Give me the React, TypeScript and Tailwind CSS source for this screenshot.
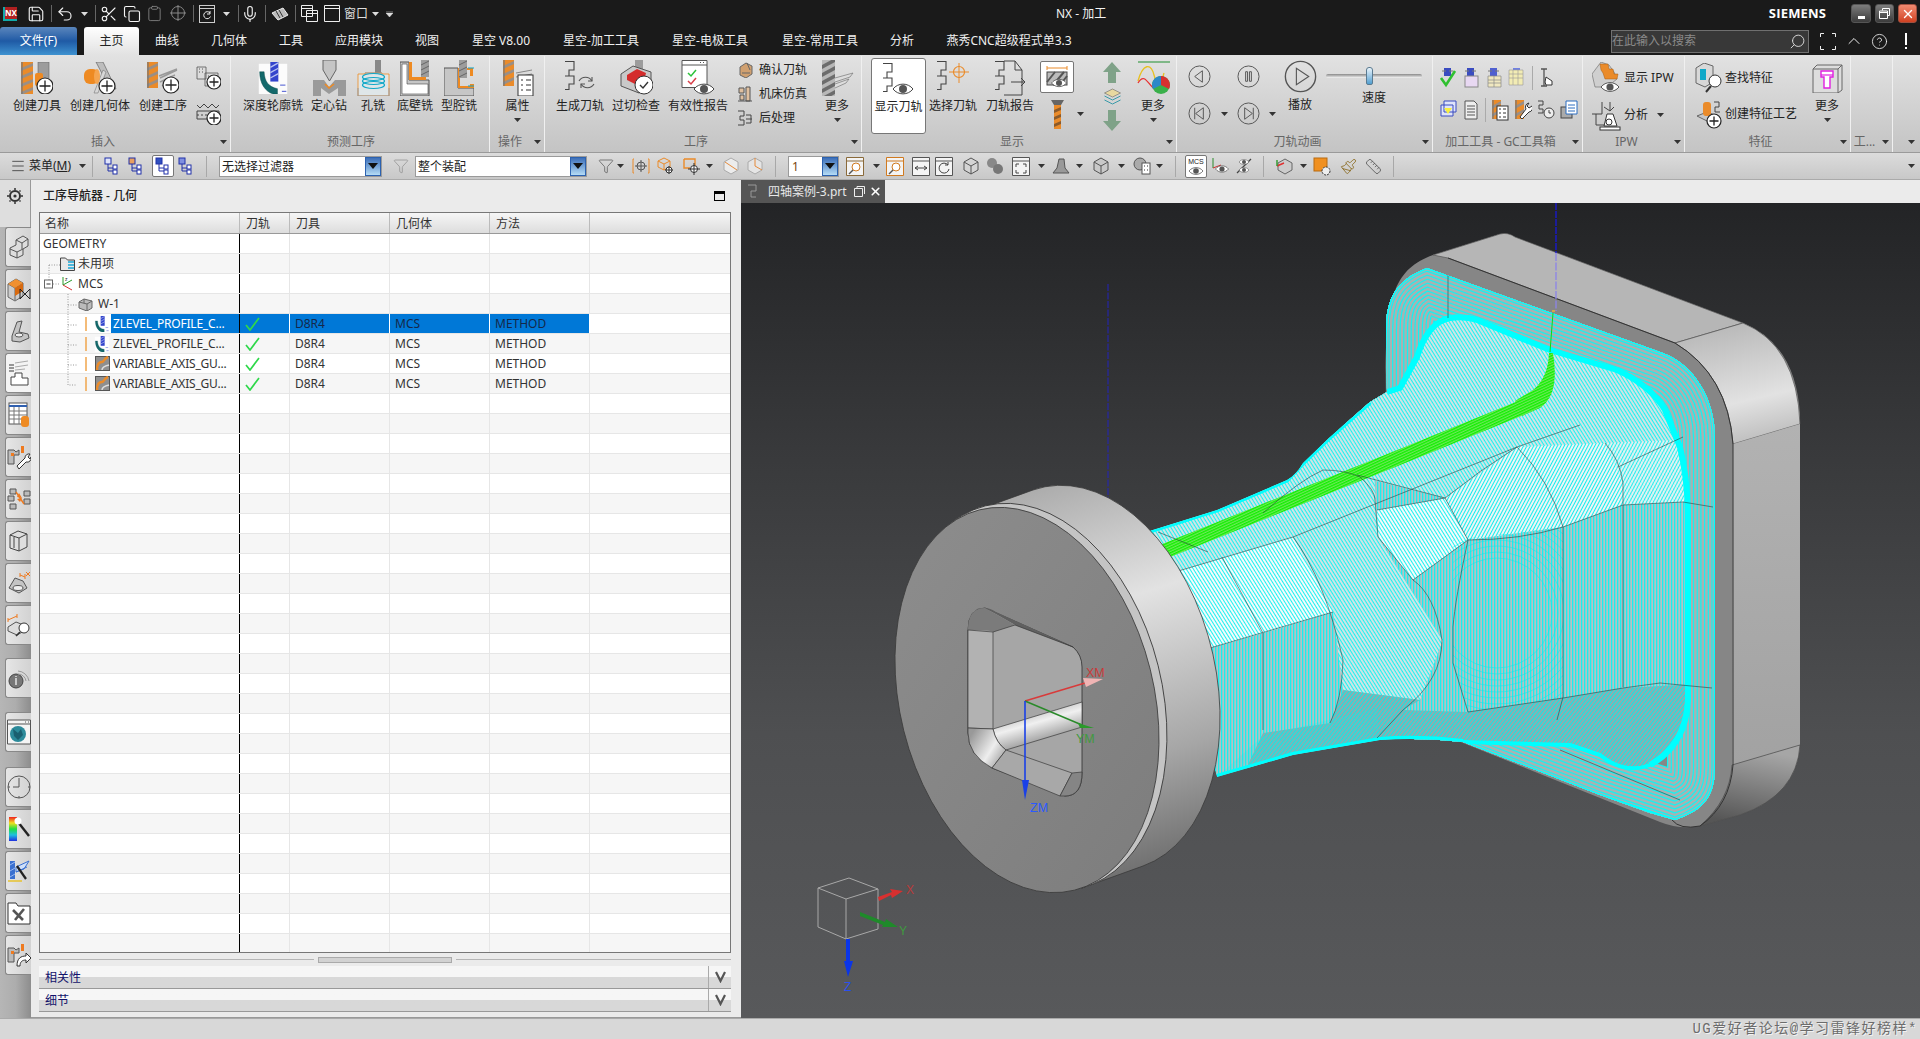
import type { ReactNode } from "react";
import { Save, Undo2, Scissors, Copy, Clipboard, Mic, Search, CircleHelp, ChevronUp, Menu, X, Filter, Ruler, Paintbrush } from "lucide-react";

const Sv = ({ w = 32, h = 32, children }: { w?: number; h?: number; children?: ReactNode }) => (
  <svg width={w} height={h} viewBox={`0 0 ${w} ${h}`} className="block shrink-0">
    {children}
  </svg>
);

const Caret = ({ dark = true }: { dark?: boolean }) => (
  <svg width="7" height="4" viewBox="0 0 7 4" className="block shrink-0">
    <path d="M0 0h7L3.5 4z" fill={dark ? "#333" : "#ddd"} />
  </svg>
);

// little drawing parts shared by the ribbon icons
const Mill = ({ x, y, w = 12, h = 32, c = "#ea8b2a" }: { x: number; y: number; w?: number; h?: number; c?: string }) => (
  <g>
    <rect x={x} y={y} width={w} height={h} fill={c} />
    {Array.from({ length: Math.floor(h / 8) }).map((_, i) => (
      <path key={i} d={`M${x} ${y + i * 8 + 6}L${x + w} ${y + i * 8 + 1}v3L${x} ${y + i * 8 + 9}z`} fill="#9a8f86" />
    ))}
    <rect x={x} y={y} width={2} height={h} fill="#777" opacity=".6" />
  </g>
);

const Plus = ({ x, y, r = 8 }: { x: number; y: number; r?: number }) => (
  <g>
    <circle cx={x} cy={y} r={r} fill="#fff" stroke="#222" strokeWidth="1.2" />
    <path d={`M${x - r + 2.5} ${y}H${x + r - 2.5}M${x} ${y - r + 2.5}V${y + r - 2.5}`} stroke="#222" strokeWidth="1.3" />
  </g>
);

const Eye = ({ x, y, r = 1 }: { x: number; y: number; r?: number }) => (
  <g transform={`translate(${x} ${y}) scale(${r})`}>
    <path d="M-10 0C-5 -6.5 5 -6.5 10 0C5 6.5 -5 6.5 -10 0z" fill="#fff" stroke="#444" strokeWidth="1" />
    <circle r="4" fill="#555" />
  </g>
);

const PathS = ({ x = 0, y = 0, s = 1, c = "#444" }: { x?: number; y?: number; s?: number; c?: string }) => (
  <path
    transform={`translate(${x} ${y}) scale(${s})`}
    d="M1 .5H10V9H5V15H10V23H5V28.5H1M5 15H1"
    fill="none"
    stroke={c}
    strokeWidth="1.1"
  />
);

const CircleBtn = ({ s = 23, children }: { s?: number; children?: ReactNode }) => (
  <svg width={s} height={s} viewBox="0 0 24 24" className="block shrink-0">
    <circle cx="12" cy="12" r="11" fill="none" stroke="#555" strokeWidth="1" />
    <g fill="none" stroke="#555" strokeWidth="1">{children}</g>
  </svg>
);

// ribbon large icons
const CreateTool = () => (
  <Sv>
    <Mill x={0} y={0} />
    <rect x={17} y={0} width={11} height={19} fill="#9c9c9c" stroke="#666" strokeWidth=".6" />
    <rect x={14} y={11} width={8} height={13} rx={2} fill="#ee8a22" />
    <Plus x={24} y={24} />
  </Sv>
);
const CreateGeom = () => (
  <Sv w={34}>
    <path d="M13 0h7l13 27h-6z" fill="#bdbdbd" stroke="#666" strokeWidth=".7" />
    <path d="M11 31L20 8l3 2-8 21z" fill="#d8d8d8" stroke="#777" strokeWidth=".6" />
    <rect x={1} y={7} width={15} height={15} rx={6} fill="#ee8a22" />
    <ellipse cx="14" cy="14.5" rx="3" ry="7.5" fill="#f5a550" />
    <Plus x={24} y={24} />
  </Sv>
);
const CreateOp = () => (
  <Sv>
    <Mill x={0} y={0} w={11} h={26} />
    <path d="M13 16l17-8M13 20l15-7M15 24l10-5M12 14l18-7" stroke="#999" strokeWidth="1.4" fill="none" />
    <Plus x={24} y={23} />
  </Sv>
);
const SmallA = () => (
  <Sv w={25} h={24}>
    <path d="M1 1h9v12H1zM9 7h13v13H9z" fill="#ddd" stroke="#555" strokeWidth=".8" />
    <path d="M3 3h1M6 3h1M3 6h1M6 6h1M12 10h1M15 10h1M18 10h1M12 13h1M15 13h1" stroke="#555" />
    <Plus x={18} y={16} r={7} />
  </Sv>
);
const SmallB = () => (
  <Sv w={25} h={25}>
    <path d="M1 5l3 3 4-4 4 4 4-4 4 4 3-3M1 11h22M1 11v8h10M23 11v2" fill="none" stroke="#444" strokeWidth="1" />
    <path d="M1 15h22" stroke="#444" strokeDasharray="2 2" />
    <Plus x={18} y={18} r={7} />
  </Sv>
);
const ZLevel = ({ s = 32 }: { s?: number }) => (
  <svg width={s} height={s} viewBox="0 0 32 36" className="block shrink-0">
    <rect x="0" y="2" width="32" height="34" fill="#fff" opacity=".9" />
    <path d="M1 11h5c.5 11 5 17 15 19v6H16C7 33 1 24 1 11z" fill="#14696b" stroke="#0b4a4c" strokeWidth=".5" />
    <rect x="13" y="0" width="9" height="22" fill="#3344cc" />
    <path d="M13 6l9-5M13 12l9-5M13 18l9-5" stroke="#b9c3f0" strokeWidth="1.5" />
    <path d="M24 26h6M26 33h5" stroke="#3344cc" strokeWidth="1" />
  </svg>
);
const SpotDrill = () => (
  <Sv w={33} h={36}>
    <path d="M0 20h11l5 7 6-7h11v16h-8V28l-9 6-8-6v8H0z" fill="#9a9a9a" />
    <path d="M10 0h13v10l-6.500 11L10 10z" fill="#c5c5c5" stroke="#666" />
    <path d="M12 24l4 4 5-4" stroke="#ee8a22" strokeWidth="1.6" fill="none" />
  </Sv>
);
const HoleMill = () => (
  <Sv w={33} h={36}>
    <rect x={18} y={0} width={6} height={13} fill="#888" />
    <path d="M1 14h7v-1h17v1h7v22H1z" fill="#dfe6e8" stroke="#ee8a22" strokeWidth=".8" />
    <path d="M1 28v8h31v-8M8 13h17" stroke="#999" fill="none" />
    {[17, 21, 25].map((y) => (
      <ellipse key={y} cx="16.500" cy={y} rx="11" ry="3.500" fill="none" stroke="#10a8c8" strokeWidth="1.2" />
    ))}
  </Sv>
);
const FloorWall = () => (
  <Sv w={30} h={36}>
    <path d="M0 2h9v18h20v16H0z" fill="#c6c6c6" stroke="#555" />
    <path d="M9 2h3v15h14v3H9z" fill="#ee8a22" />
    <path d="M2 4h5v20h21v10H2z" fill="#fff" stroke="#444" strokeWidth=".6" />
    <rect x={21} y={0} width={8} height={17} fill="#9c9c9c" />
    <path d="M21 5l8-4M21 10l8-4M21 15l8-4" stroke="#666" />
  </Sv>
);
const Cavity = () => (
  <Sv w={30} h={36}>
    <path d="M0 8h14v20h16v8H0z" fill="#c6c6c6" stroke="#555" />
    <path d="M14 8h15v8h-3v-6H16v16h10v-2h4v4H14z" fill="#ee8a22" />
    <path d="M24 8h6M24 26h6" stroke="#0aa3c8" />
    <rect x={15} y={0} width={8} height={18} fill="#9c9c9c" />
    <path d="M15 5l8-4M15 11l8-4M15 17l8-4" stroke="#666" />
  </Sv>
);
const Props = () => (
  <Sv w={32} h={36}>
    <Mill x={1} y={0} w={11} h={26} />
    <path d="M14 13l16-3M14 17l16-3" stroke="#888" />
    <rect x={16} y={15} width={15} height={21} fill="#fff" stroke="#333" />
    <path d="M19 20h2M24 20h5M19 25h2M24 25h5M19 30h2M24 30h5" stroke="#333" strokeWidth="1.2" />
  </Sv>
);
const GenPath = () => (
  <Sv w={34} h={36}>
    <PathS x={1} y={1} />
    <path d="M16 21c3-5 10-5 13 0M31 24c-3 5-10 5-13 0" fill="none" stroke="#555" strokeWidth="1.1" />
    <path d="M29 17v4h-4M18 28v-4h4" fill="none" stroke="#555" strokeWidth="1.1" />
  </Sv>
);
const Gouge = () => (
  <Sv w={34} h={36}>
    <rect x={16} y={0} width={8} height={14} fill="#9c9c9c" />
    <path d="M2 14l12-8 18 6v14l-12 7-18-7z" fill="#c9c9c9" stroke="#555" />
    <path d="M8 15l10-6 9 4-2 8-9 3-8-4z" fill="#d42c2c" />
    <circle cx="25" cy="25" r="9" fill="#fff" stroke="#333" />
    <path d="M21 25l3 3 5-6" stroke="#333" strokeWidth="1.4" fill="none" />
  </Sv>
);
const Report = () => (
  <Sv w={34} h={36}>
    <path d="M1 .5h25v27H1zM1 5h25" fill="#fff" stroke="#555" />
    <path d="M19 2.500h1M22 2.500h1" stroke="#555" />
    <path d="M7 13l3 3 5-6" stroke="#2cc23a" strokeWidth="1.5" fill="none" />
    <path d="M7 21l3 3 5-6" stroke="#d8404a" strokeWidth="1.5" fill="none" />
    <Eye x={23} y={29} />
  </Sv>
);
const MoreMill = () => (
  <Sv w={33} h={36}>
    <rect x={1} y={0} width={13} height={36} fill="#b8b8b8" />
    {[0, 1, 2, 3, 4].map((i) => (
      <path key={i} d={`M1 ${i * 8 + 5}L14 ${i * 8 - 2}v4L1 ${i * 8 + 9}z`} fill="#6c6c6c" />
    ))}
    <path d="M14 18l18-5-3 4 -15 5M14 24l14-5-3 4-11 5" fill="#ddd" stroke="#777" strokeWidth=".7" />
  </Sv>
);
const ShowPath = () => (
  <Sv w={36} h={36}>
    <PathS x={1} y={1} />
    <Eye x={22} y={27} />
  </Sv>
);
const PickPath = () => (
  <Sv w={36} h={36}>
    <PathS x={1} y={1} />
    <path d="M14 12h20M24 3v20" stroke="#ea8b2a" />
    <circle cx="24" cy="12" r="5.500" fill="none" stroke="#ea8b2a" strokeWidth="1.2" />
  </Sv>
);
const PathReport = () => (
  <Sv w={34} h={36}>
    <PathS x={1} y={1} />
    <path d="M11 1h11l7 9v25H11" fill="none" stroke="#444" />
    <path d="M22 1v9h7" fill="none" stroke="#444" />
    <path d="M18 22h14M28 18l4 4-4 4" fill="none" stroke="#444" />
  </Sv>
);
const ShowIPW = () => (
  <svg width="30" height="32" viewBox="0 0 30 32" className="block shrink-0">
    <path d="M0 12l9-12 8 3 5 7 3 7-10 8H3z" fill="#cfcfcf" stroke="#666" strokeWidth=".6" />
    <path d="M8 2h8l1 5h4l1 5h4l-1 5H13l-2-6-2-3z" fill="#ea8b2a" stroke="#a85e12" strokeWidth=".5" />
    <Eye x={18} y={25} r={.9} />
  </svg>
);
const Analyze = () => (
  <svg width="30" height="32" viewBox="0 0 30 32" className="block shrink-0">
    <path d="M0 15h10V3M4 15v11h10" fill="none" stroke="#444" />
    <path d="M12 8l6 4M22 8l-4 4M18 3v9" stroke="#444" fill="none" />
    <path d="M15 15h6l4 12H12z" fill="#fff" stroke="#333" />
    <rect x={8} y={28} width={20} height={3} fill="#fff" stroke="#333" />
    <circle cx="17" cy="23" r="3" fill="#fff" stroke="#333" />
  </svg>
);
const FindFeature = () => (
  <svg width="28" height="30" viewBox="0 0 28 30" className="block shrink-0">
    <path d="M1 5l8-5 9 3v16l-8 5-9-4z" fill="#d8d8d8" stroke="#666" />
    <rect x={5} y={6} width={6} height={11} fill="#10a8c8" />
    <circle cx="20" cy="18" r="6" fill="#fff" stroke="#333" />
    <path d="M16 23l-5 6" stroke="#333" strokeWidth="2" />
  </svg>
);
const CreateFeature = () => (
  <svg width="30" height="30" viewBox="0 0 30 30" className="block shrink-0">
    <path d="M2 17l10-4 10 4-8 6z" fill="#c6c6c6" stroke="#666" />
    <rect x={8} y={3} width={8} height={14} rx={3} fill="#ea8b2a" />
    <path d="M19 3h5v5h-4v5h5" fill="none" stroke="#444" />
    <Plus x={19} y={22} r={7} />
  </svg>
);
const MoreBox = () => (
  <Sv w={31} h={29}>
    <path d="M5 1h25v25l-4 3H1V5z" fill="#ddd" stroke="#666" />
    <path d="M1 5h25v24M26 5l4-4" fill="none" stroke="#666" />
    <path d="M9 7h12v6h-3v11h-6V13H9z" fill="#fff" stroke="#e020e0" strokeWidth="1.4" />
    <path d="M9 11h12" stroke="#e020e0" strokeWidth="1.2" />
  </Sv>
);
const Tiny = ({ c = "#3a4cc0", v = "list" }: { c?: string; v?: string }) => (
  <Sv w={18} h={20}>
    <rect x={5} y={0} width={7} height={8} fill={c} />
    <path d="M3 3h4M10 3h4" stroke="#777" />
    {v === "check" ? <path d="M2 10l5 7 9-14" fill="none" stroke="#30c030" strokeWidth="2.6" /> : null}
    {v === "doc" ? <rect x={3} y={8} width={13} height={11} fill="#e8d8f2" stroke="#888" /> : null}
    {v === "list" ? <path d="M3 8h13v11H3zM3 12h13M3 15h13M9 8v11" fill="#f0e8c0" stroke="#888" strokeWidth=".7" /> : null}
    {v === "grid" ? <path d="M1 2h14v15H1zM1 6h14M1 10h14M5 2v15M10 2v15" fill="#f2ecb4" stroke="#999" strokeWidth=".6" /> : null}
  </Sv>
);
const MillSq = ({ k = "list" }: { k?: string }) => (
  <Sv w={18} h={22}>
    <Mill x={1} y={1} w={9} h={19} />
    {k === "list" ? (
      <g>
        <rect x={6} y={7} width={11} height={14} fill="#fff" stroke="#333" />
        <path d="M8 10h2M12 10h3M8 14h2M12 14h3M8 18h2M12 18h3" stroke="#333" />
      </g>
    ) : (
      <path d="M15 4a4 4 0 0 0-3 6l-6 8 2 2 7-7a4 4 0 0 0 3-6l-3 2-2-2z" fill="#fff" stroke="#333" />
    )}
  </Sv>
);

// toolbar small icons
const Tree = ({ hi }: { hi?: string }) => (
  <Sv w={16} h={18}>
    <rect x={1} y={1} width={6} height={6} fill={hi ?? "#dfe4fa"} stroke="#2030a8" />
    <path d="M4 7v7h5M4 11h5" fill="none" stroke="#2030a8" />
    <rect x={9} y={8} width={4} height={4} fill="#fff" stroke="#2030a8" />
    <rect x={9} y={13} width={4} height={4} fill="#fff" stroke="#2030a8" />
  </Sv>
);
const Win = ({ children, c = "#555" }: { children?: ReactNode; c?: string }) => (
  <Sv w={18} h={19}>
    <path d="M.5 .5h17v18H.5zM.5 4h17" fill="#f4f4f4" stroke={c} />
    {children}
  </Sv>
);
const Cube = ({ c = "#d4d4d4" }: { c?: string }) => (
  <Sv w={18} h={18}>
    <path d="M9 1l7 4v8l-7 4-7-4V5z" fill={c} stroke="#555" />
    <path d="M2 5l7 4 7-4M9 9v8" fill="none" stroke="#555" />
  </Sv>
);
const Tb = ({ cn, children }: { cn: string; children?: ReactNode }) => (
  <div className={`${cn} h-[20px] shrink-0 flex items-center justify-center`}>{children}</div>
);
const TbSep = ({ cn }: { cn: string }) => <div className={`${cn} w-px h-[21px] bg-[#f4f4f4] border-l border-[#a8a8a8] shrink-0`} />;
const TCaret = ({ cn }: { cn: string }) => (
  <div className={`${cn} w-[10px] shrink-0 flex justify-center`}>
    <Caret />
  </div>
);

const Combo = ({ cn, text }: { cn: string; text: string }) => (
  <div className={`${cn} h-[21px] shrink-0 bg-white border border-[#9a9a9a] flex items-stretch`}>
    <div className="flex-1 px-[2px] leading-[20px] whitespace-nowrap overflow-hidden text-[#222]">{text}</div>
    <div className="w-[16px] border border-[#2c62b0] bg-gradient-to-b from-[#3d6fb8] to-[#b5dcf5] flex items-center justify-center">
      <svg width="10" height="6" viewBox="0 0 10 6"><path d="M0 0h10L5 6z" fill="#111" /></svg>
    </div>
  </div>
);

// ribbon layout
const Group = ({ w, label, caret = true, lc = "", children }: { w: string; label: string; caret?: boolean; lc?: string; children?: ReactNode }) => (
  <div className={`${w} shrink-0 flex flex-col border-r border-[#f0f0f0]`}>
    <div className="h-[76px] flex">{children}</div>
    <div className="h-[21px] flex items-center text-[#666]">
      <div className={`flex-1 min-w-0 text-center whitespace-nowrap overflow-hidden ${lc}`}>{label}</div>
      {caret ? (
        <div className="w-[14px] flex justify-center shrink-0">
          <Caret />
        </div>
      ) : null}
    </div>
  </div>
);

const Big = ({ w, label, caret, children, active }: { w: string; label: string; caret?: boolean; children?: ReactNode; active?: boolean }) => (
  <div
    className={`${w} shrink-0 flex flex-col items-center ${active ? "pt-[4px] bg-white border border-[#777] rounded-[3px] h-[76px] mt-[2px]" : "pt-[5px]"}`}
  >
    <div className="h-[34px] flex items-center justify-center">{children}</div>
    <div className={`${active ? "mt-[1px]" : "mt-[2px]"} h-[18px] leading-[18px] whitespace-nowrap text-[#222]`}>{label}</div>
    {caret ? (
      <div className="mt-[3px]">
        <Caret />
      </div>
    ) : null}
  </div>
);

const Ribbon = () => (
  <div className="h-[98px] shrink-0 flex bg-gradient-to-b from-[#e2e2e2] to-[#c4c4c4] border-b border-[#9a9a9a] pt-[1px]">
    <Group w="w-[231px]" label="插入" lc="pr-[10px]">
      <div className="w-[6px]" />
      <Big w="w-[62px]" label="创建刀具"><CreateTool /></Big>
      <Big w="w-[64px]" label="创建几何体"><CreateGeom /></Big>
      <Big w="w-[62px]" label="创建工序"><CreateOp /></Big>
      <div className="w-[28px] flex flex-col items-center pt-[10px] gap-[10px]">
        <SmallA />
        <SmallB />
      </div>
    </Group>
    <Group w="w-[259px]" label="预测工序" caret={false} lc="pr-[18px]">
      <div className="w-[12px]" />
      <Big w="w-[60px]" label="深度轮廓铣"><ZLevel /></Big>
      <Big w="w-[52px]" label="定心钻"><SpotDrill /></Big>
      <Big w="w-[36px]" label="孔铣"><HoleMill /></Big>
      <Big w="w-[48px]" label="底壁铣"><FloorWall /></Big>
      <Big w="w-[40px]" label="型腔铣"><Cavity /></Big>
    </Group>
    <Group w="w-[55px]" label="操作">
      <Big w="w-[55px]" label="属性" caret><Props /></Big>
    </Group>
    <Group w="w-[317px]" label="工序">
      <div className="w-[12px]" />
      <Big w="w-[48px]" label="生成刀轨"><GenPath /></Big>
      <Big w="w-[64px]" label="过切检查"><Gouge /></Big>
      <Big w="w-[60px]" label="有效性报告"><Report /></Big>
      <div className="w-[85px] shrink-0 flex flex-col pt-[5px] gap-[6px]">
        {[
          { t: "确认刀轨", i: <path d="M3 5l6-4 6 3v8l-6 4-6-3zM10 1l3 7M5 11h8" fill="#d0a070" stroke="#666" /> },
          { t: "机床仿真", i: <path d="M2 2h5v5H2zM9 1h4v14H9zM1 15h14M3 9h4v5H3z" fill="#e0c0a0" stroke="#555" /> },
          { t: "后处理", i: <path d="M1 1h6v5H3v4h4v5H1M9 5h5v8H9M9 9h6" fill="none" stroke="#444" /> },
        ].map((r) => (
          <div key={r.t} className="flex items-center h-[18px]">
            <div className="w-[31px] pl-[9px] shrink-0"><Sv w={16} h={16}>{r.i}</Sv></div>
            <span className="whitespace-nowrap text-[#222]">{r.t}</span>
          </div>
        ))}
      </div>
      <Big w="w-[48px]" label="更多" caret><MoreMill /></Big>
    </Group>
    <Group w="w-[315px]" label="显示">
      <div className="w-[9px]" />
      <Big w="w-[55px]" label="显示刀轨" active><ShowPath /></Big>
      <Big w="w-[54px]" label="选择刀轨"><PickPath /></Big>
      <Big w="w-[60px]" label="刀轨报告"><PathReport /></Big>
      <div className="w-[50px] shrink-0 flex flex-col pt-[5px]">
        <div className="w-[34px] h-[32px] bg-white border border-[#777] rounded-[2px] flex items-center justify-center">
          <Sv w={26} h={26}>
            <path d="M3 4h20M3 2v4M23 2v4" stroke="#ea8b2a" fill="none" />
            <rect x="3" y="8" width="20" height="13" fill="#bbb" stroke="#444" />
            <path d="M3 18l8-10M9 21l11-13M16 21l7-9" stroke="#555" strokeWidth="2" />
            <Eye x={15} y={19} r={.75} />
          </Sv>
        </div>
        <div className="flex items-center mt-[10px] h-[22px]">
          <div className="w-[34px] flex justify-center">
            <Sv w={13} h={29}>
              <path d="M0 0h13l-3 5H3z" fill="#666" />
              <rect x={3} y={5} width={7} height={24} fill="#ea8b2a" />
              <path d="M3 10l7-3v3l-7 3zM3 17l7-3v3l-7 3zM3 24l7-3v3l-7 3z" fill="#8a5a2a" />
            </Sv>
          </div>
          <div className="ml-[3px]"><Caret /></div>
        </div>
      </div>
      <div className="w-[44px] shrink-0 flex flex-col items-center pt-[6px] gap-[5px]">
        <Sv w={18} h={21}><path d="M9 0l9 10h-5v11H5V10H0z" fill="#7fa288" /></Sv>
        <Sv w={17} h={17}>
          <path d="M8.500 1l8 4-8 4-8-4z" fill="#e8d8a0" stroke="#666" strokeWidth=".6" />
          <path d="M.5 8l8 4 8-4M.5 12l8 4 8-4" fill="none" stroke="#3a9aa8" />
        </Sv>
        <Sv w={18} h={21}><path d="M9 21L0 11h5V0h8v11h5z" fill="#7fa288" /></Sv>
      </div>
      <Big w="w-[38px]" label="更多" caret>
        <Sv w={33} h={34}>
          <path d="M1 1h32" stroke="#1f8f2f" />
          <path d="M1 20C6 2 14 2 17 14s7 10 10-2" fill="none" stroke="#e8c020" strokeWidth="1.3" />
          <path d="M1 22C8 10 12 26 18 28" fill="none" stroke="#e83030" strokeWidth="1.3" />
          <circle cx="24" cy="24" r="9" fill="#3ab04a" />
          <path d="M24 24V15a9 9 0 0 1 8 13z" fill="#d83030" />
          <path d="M24 24V15a9 9 0 0 0-8 13z" fill="#2c88c8" />
        </Sv>
      </Big>
    </Group>
    <Group w="w-[256px]" label="刀轨动画">
      <div className="pl-[11px] shrink-0 flex flex-col pt-[9px] gap-[14px]">
        <div className="flex items-center">
          <CircleBtn><path d="M15 6v12L7 12z" /></CircleBtn>
          <div className="w-[26px]" />
          <CircleBtn><path d="M9 7v10h2V7zM13 7v10h2V7z" /></CircleBtn>
          <div className="w-[24px]" />
        </div>
        <div className="flex items-center">
          <CircleBtn><path d="M7 6v12M16 6v12L8 12z" /></CircleBtn>
          <div className="w-[26px] flex justify-center"><Caret /></div>
          <CircleBtn><path d="M17 6v12M8 6v12l8-6z" /></CircleBtn>
          <div className="w-[24px] flex justify-center"><Caret /></div>
        </div>
      </div>
      <div className="w-[32px] shrink-0 flex flex-col items-center pt-[4px]">
        <CircleBtn s={33}><path d="M9 6v12l9-6z" strokeWidth=".8" /></CircleBtn>
        <div className="mt-[3px] leading-[18px] whitespace-nowrap text-[#222]">播放</div>
      </div>
      <div className="ml-[10px] w-[96px] shrink-0 flex flex-col items-center pt-[10px]">
        <div className="w-[96px] h-[4px] mt-[8px] pr-[10px] rounded-sm bg-gradient-to-b from-[#8a8a8a] to-[#f6f6f6] flex justify-center items-center">
          <div className="w-[7px] h-[18px] rounded-t-[3px] rounded-b-[2px] bg-gradient-to-b from-[#eaf4fb] to-[#4f9fd0] border border-[#5a7a90] shrink-0" />
        </div>
        <div className="mt-[11px] leading-[18px] whitespace-nowrap text-[#222]">速度</div>
      </div>
    </Group>
    <Group w="w-[150px]" label="加工工具 - GC工具箱">
      <div className="pl-[6px] flex flex-col pt-[10px] gap-[8px]">
        <div className="flex items-center gap-[5px]">
          <Tiny v="check" />
          <Tiny v="doc" />
          <Tiny c="#5060d0" v="list" />
          <Tiny c="#7080e0" v="grid" />
          <div className="w-px h-[24px] bg-[#f4f4f4] border-l border-[#aaa] ml-[1px]" />
          <Sv w={16} h={20}>
            <path d="M3 1h6M6 1v17M3 18h6" stroke="#555" strokeWidth="1.3" />
            <path d="M8 9l6 4v4h-6l-1-3z" fill="#fff" stroke="#333" />
          </Sv>
        </div>
        <div className="flex items-center">
          <Sv w={18} h={20}><path d="M5 1h12v11H5zM2 5h12v11H2z" fill="#dfe4fa" stroke="#3a4cc0" /><path d="M5 8l4 6 4-6z" fill="#f8f040" /></Sv>
          <div className="ml-[5px]"><Sv w={17} h={20}><path d="M3 1h9l3 3v15H3z" fill="#eee" stroke="#555" /><path d="M5 6h8M5 9h8M5 12h8M5 15h8" stroke="#555" /></Sv></div>
          <div className="w-px h-[24px] bg-[#f4f4f4] border-l border-[#aaa] ml-[6px]" />
          <div className="ml-[5px]"><MillSq /></div>
          <div className="ml-[5px]"><MillSq k="wrench" /></div>
          <div className="ml-[5px]"><Sv w={18} h={20}><path d="M1 1h5v4H2v4h4v4H1" fill="none" stroke="#444" /><circle cx="12" cy="13" r="5" fill="#eee" stroke="#444" /><path d="M12 10v3h2" stroke="#444" fill="none" /></Sv></div>
          <div className="ml-[5px]"><Sv w={18} h={20}><rect x={1} y={7} width={11} height={11} fill="#aaa" stroke="#444" /><path d="M6 1h11v13H6z" fill="#fff" stroke="#2a6cc0" /><path d="M8 5h7M8 8h7M8 11h7" stroke="#2a6cc0" /></Sv></div>
        </div>
      </div>
    </Group>
    <Group w="w-[102px]" label="IPW">
      <div className="pl-[9px] pt-[6px] flex flex-col gap-[5px]">
        <div className="flex items-center h-[32px]">
          <ShowIPW />
          <span className="ml-[2px] whitespace-nowrap text-[#222]">显示 IPW</span>
        </div>
        <div className="flex items-center h-[32px]">
          <Analyze />
          <span className="ml-[2px] whitespace-nowrap text-[#222]">分析</span>
          <div className="ml-[9px]"><Caret /></div>
        </div>
      </div>
    </Group>
    <Group w="w-[166px]" label="特征">
      <div className="pl-[10px] w-[124px] shrink-0 pt-[7px] flex flex-col gap-[6px]">
        <div className="flex items-center h-[30px] gap-[2px]">
          <FindFeature />
          <span className="whitespace-nowrap text-[#222]">查找特征</span>
        </div>
        <div className="flex items-center h-[30px]">
          <CreateFeature />
          <span className="whitespace-nowrap text-[#222]">创建特征工艺</span>
        </div>
      </div>
      <Big w="w-[36px]" label="更多" caret><MoreBox /></Big>
    </Group>
    <Group w="w-[42px]" label="工...">
      <div />
    </Group>
    <div className="w-[27px] shrink-0 flex flex-col justify-end">
      <div className="h-[21px] flex items-center justify-end pr-[5px]"><Caret /></div>
    </div>
  </div>
);

const Toolbar = () => (
  <div className="h-[27px] shrink-0 flex items-center bg-gradient-to-b from-[#dcdcdc] to-[#c8c8c8] border-b border-[#aaa] pl-[8px]">
    <Tb cn="w-[20px]"><Menu size={16} strokeWidth={1.2} color="#333" /></Tb>
    <div className="ml-px w-[44px] whitespace-nowrap text-[#222]">菜单(<span className="underline">M</span>)</div>
    <TCaret cn="ml-[4px]" />
    <TbSep cn="ml-[5px]" />
    <Tb cn="ml-[9px] w-[20px]"><Tree /></Tb>
    <Tb cn="ml-[4px] w-[20px]"><Tree hi="#e8a060" /></Tb>
    <Tb cn="ml-[6px] w-[22px] h-[22px] bg-white border border-[#777] rounded-[2px]"><Tree hi="#3050c0" /></Tb>
    <Tb cn="ml-[2px] w-[20px]"><Tree hi="#8090e0" /></Tb>
    <TbSep cn="ml-[10px]" />
    <Combo cn="ml-[12px] w-[163px]" text="无选择过滤器" />
    <Tb cn="ml-[9px] w-[20px]"><Filter size={16} strokeWidth={1} color="#888" /></Tb>
    <Combo cn="ml-[4px] w-[172px]" text="整个装配" />
    <Tb cn="ml-[10px] w-[18px]"><Filter size={16} strokeWidth={1.1} color="#555" /></Tb>
    <TCaret cn="" />
    <Tb cn="ml-[6px] w-[20px]"><Sv w={18} h={18}><path d="M2 2H1v14h1M16 2h1v14h-1" stroke="#ea8b2a" fill="none" /><circle cx="9" cy="9" r="4" fill="none" stroke="#555" /><path d="M9 3v12M3 9h12" stroke="#555" /></Sv></Tb>
    <Tb cn="ml-[4px] w-[20px]"><Sv w={18} h={18}><path d="M8 1l6 3v6l-6 3-6-3V4z" fill="none" stroke="#ea8b2a" /><path d="M2 4l6 3 6-3M8 7v6" fill="none" stroke="#ea8b2a" /><circle cx="13" cy="13" r="3" fill="#fff" stroke="#333" /><path d="M13 9v8M9 13h8" stroke="#333" /></Sv></Tb>
    <Tb cn="ml-[6px] w-[20px]"><Sv w={18} h={18}><path d="M2 2h11v9" fill="none" stroke="#ea8b2a" strokeWidth="1.4" /><path d="M2 2v9h6" fill="none" stroke="#ea8b2a" strokeWidth="1.4" /><circle cx="12" cy="12" r="3.500" fill="#fff" stroke="#333" /><path d="M12 6v12M6 12h12" stroke="#333" /></Sv></Tb>
    <TCaret cn="ml-[3px]" />
    <Tb cn="ml-[7px] w-[20px]"><Sv w={18} h={18}><path d="M9 1l7 4v8l-7 4-7-4V5z" fill="#ececec" stroke="#aaa" /><path d="M3 5l12 8" stroke="#e58a3a" /></Sv></Tb>
    <Tb cn="ml-[4px] w-[20px]"><Sv w={18} h={18}><path d="M9 1l7 4v8l-7 4-7-4V5z" fill="#e5e5e5" stroke="#aaa" /><path d="M9 1v8l7 4" fill="none" stroke="#e58a3a" /></Sv></Tb>
    <TbSep cn="ml-[10px]" />
    <div className="ml-[12px] w-[51px] h-[21px] shrink-0 bg-white border border-[#9a9a9a] flex">
      <div className="flex-1 pl-[3px] leading-[20px] text-[#7a4510]">1</div>
      <div className="w-[16px] border border-[#2c62b0] bg-gradient-to-b from-[#3d6fb8] to-[#b5dcf5] flex items-center justify-center">
        <svg width="10" height="6" viewBox="0 0 10 6"><path d="M0 0h10L5 6z" fill="#111" /></svg>
      </div>
    </div>
    <Tb cn="ml-[6px] w-[20px]"><Win c="#8a6a3a"><circle cx="10" cy="10" r="4" fill="#fff" stroke="#d07a20" /><path d="M7 13l-4 4" stroke="#555" strokeWidth="1.4" /></Win></Tb>
    <TCaret cn="ml-[6px]" />
    <Tb cn="ml-[4px] w-[20px]"><Win c="#d07a20"><circle cx="10" cy="10" r="4" fill="#fff" stroke="#d07a20" /><path d="M7 13l-4 4" stroke="#555" strokeWidth="1.4" /></Win></Tb>
    <Tb cn="ml-[6px] w-[20px]"><Win><path d="M3 11h12M3 11l3-2M3 11l3 2M15 11l-3-2M15 11l-3 2" stroke="#444" fill="none" /></Win></Tb>
    <Tb cn="ml-[3px] w-[20px]"><Win><path d="M13 8a5 5 0 1 0 1 4M13 5v3h-3" stroke="#444" fill="none" /></Win></Tb>
    <Tb cn="ml-[7px] w-[20px]"><Cube /></Tb>
    <Tb cn="ml-[4px] w-[20px]"><Sv w={18} h={18}><circle cx="6" cy="6" r="5" fill="#888" /><circle cx="12" cy="12" r="5" fill="#777" /></Sv></Tb>
    <Tb cn="ml-[6px] w-[20px]"><Win><path d="M4 7h3M4 7v3M14 7h-3M14 7v3M4 16h3M4 16v-3M14 16h-3M14 16v-3" stroke="#444" fill="none" /></Win></Tb>
    <TCaret cn="ml-[5px]" />
    <Tb cn="ml-[5px] w-[20px]"><Sv w={18} h={18}><path d="M7 2h5l1 9 4 5H1l4-5z" fill="#999" stroke="#555" /></Sv></Tb>
    <TCaret cn="ml-[3px]" />
    <Tb cn="ml-[7px] w-[20px]"><Cube c="#c9c9c9" /></Tb>
    <TCaret cn="ml-[5px]" />
    <Tb cn="ml-[6px] w-[20px]"><Sv w={18} h={18}><circle cx="7" cy="7" r="6" fill="#aaa" stroke="#555" /><rect x={9} y={6} width={8} height={11} fill="#fff" stroke="#555" /><path d="M11 9h1M14 9h1M11 13h1M14 13h1" stroke="#333" /></Sv></Tb>
    <TCaret cn="ml-[2px]" />
    <TbSep cn="ml-[11px]" />
    <Tb cn="ml-[9px] w-[22px] h-[23px] bg-white border border-[#777] rounded-[2px]">
      <Sv w={20} h={21}>
        <text x="10" y="8" textAnchor="middle" fontSize="7" fontFamily="Liberation Sans" fill="#222">MCS</text>
        <Eye x={10} y={15} r={.7} />
      </Sv>
    </Tb>
    <Tb cn="ml-[3px] w-[20px]"><Sv w={18} h={18}><path d="M2 1v10" stroke="#2a8a2a" /><path d="M2 11l8-3" stroke="#d03030" /><Eye x={11} y={12} r={.65} /></Sv></Tb>
    <Tb cn="ml-[4px] w-[20px]"><Sv w={18} h={18}><path d="M2 16L16 2" stroke="#444" strokeWidth="1.2" /><Eye x={9} y={5} r={.5} /><Eye x={9} y={13} r={.5} /></Sv></Tb>
    <TbSep cn="ml-[9px]" />
    <Tb cn="ml-[11px] w-[20px]"><Sv w={18} h={18}><path d="M9 2l7 4v7l-7 4-7-4V6z" fill="#ccc" stroke="#666" /><path d="M1 9l7-3" stroke="#e03030" strokeWidth="1.4" /><path d="M1 3v6" stroke="#2a9a2a" strokeWidth="1.4" /></Sv></Tb>
    <TCaret cn="ml-[3px]" />
    <Tb cn="ml-[4px] w-[20px]"><Sv w={18} h={19}><rect x={1} y={1} width={13} height={13} fill="#f09020" stroke="#b86a10" /><circle cx="13" cy="14" r="4" fill="#eee" stroke="#333" strokeDasharray="2 1" /></Sv></Tb>
    <Tb cn="ml-[6px] w-[20px]"><Paintbrush size={17} strokeWidth={1.2} color="#8a6a20" /></Tb>
    <Tb cn="ml-[5px] w-[20px]"><Ruler size={17} strokeWidth={1.2} color="#555" /></Tb>
    <TbSep cn="ml-[10px]" />
    <div className="flex-1" />
    <div className="pr-[5px]"><Caret /></div>
  </div>
);

const Title = () => {
  const ic = { size: 18, strokeWidth: 1.5, color: "#f4f4f4" };
  const Sep = ({ cn }: { cn: string }) => <div className={`${cn} w-px h-[17px] bg-[#666] shrink-0`} />;
  const C = ({ cn, children }: { cn: string; children?: ReactNode }) => <div className={`${cn} shrink-0 flex justify-center items-center`}>{children}</div>;
  return (
    <div className="h-[27px] shrink-0 bg-[#1a1a1a] flex items-center text-[#eee]">
      <C cn="w-[20px]">
        <div className="w-[14px] h-[14px] bg-[#b02020] border-b-2 border-l-2 border-[#1aa] text-[8px] leading-[12px] text-center text-white font-bold">NX</div>
      </C>
      <C cn="w-[31px]"><Save {...ic} /></C>
      <Sep cn="" />
      <C cn="w-[26px]"><Undo2 {...ic} /></C>
      <C cn="w-[12px]"><Caret dark={false} /></C>
      <Sep cn="ml-[5px]" />
      <C cn="w-[26px]"><Scissors {...ic} /></C>
      <C cn="w-[20px]"><Copy {...ic} /></C>
      <C cn="w-[24px]"><Clipboard size={17} strokeWidth={1.2} color="#888888" /></C>
      <C cn="w-[24px]">
        <svg width="17" height="17" viewBox="0 0 17 17"><circle cx="8" cy="8" r="6.500" fill="none" stroke="#888" /><path d="M8 0v16M0 8h16" stroke="#888" /></svg>
      </C>
      <Sep cn="ml-[3px]" />
      <C cn="w-[26px]">
        <svg width="17" height="18" viewBox="0 0 17 18"><rect x=".5" y=".5" width="15" height="17" fill="none" stroke="#ccc" /><path d="M.5 3.500h15" stroke="#ccc" /><path d="M11 8a3.500 3.500 0 1 0 .5 3.500M11 6v3H8" fill="none" stroke="#eee" /></svg>
      </C>
      <C cn="w-[12px]"><Caret dark={false} /></C>
      <Sep cn="ml-[6px]" />
      <C cn="w-[22px]"><Mic {...ic} /></C>
      <Sep cn="ml-[4px]" />
      <C cn="w-[28px]">
        <svg width="18" height="14" viewBox="0 0 18 14"><path d="M1 6l11-5 5 7-10 5z" fill="#bbb" stroke="#eee" /><path d="M5 4l4 7M8 3l4 7" stroke="#333" /></svg>
      </C>
      <Sep cn="ml-px" />
      <C cn="w-[26px]">
        <svg width="17" height="17" viewBox="0 0 17 17"><path d="M.5 .5h11v11H.5zM.5 3.500h11M5.500 5.500h11v11h-11zM5.500 8.500h11" fill="#1a1a1a" stroke="#eee" /></svg>
      </C>
      <C cn="w-[20px]">
        <svg width="16" height="17" viewBox="0 0 16 17"><path d="M.5 .5h15v16H.5zM.5 3.500h15" fill="none" stroke="#eee" /></svg>
      </C>
      <div className="ml-[2px] w-[23px] shrink-0 whitespace-nowrap text-[#ddd]">窗口</div>
      <C cn="w-[16px]"><Caret dark={false} /></C>
      <C cn="w-[12px]">
        <svg width="7" height="6" viewBox="0 0 7 6"><path d="M0 0h7M0 2h7L3.500 6z" fill="#ddd" stroke="#ddd" strokeWidth=".5" /></svg>
      </C>
      <div className="ml-[661px] whitespace-nowrap text-[#f2f2f2]">NX - 加工</div>
      <div className="flex-1" />
      <div className="w-[61px] text-center font-bold text-[13px] tracking-[.2px] whitespace-nowrap text-white [font-family:'Open_Sans','Noto_Sans',sans-serif]">SIEMENS</div>
      <div className="ml-[23px] w-[20px] h-[19px] rounded-[3px] bg-gradient-to-b from-[#7d7d7d] to-[#3c3c3c] border border-[#555] flex items-end justify-center pb-[3px]">
        <div className="w-[7px] h-[3px] bg-white" />
      </div>
      <div className="ml-[4px] w-[19px] h-[19px] rounded-[3px] bg-gradient-to-b from-[#7d7d7d] to-[#3c3c3c] border border-[#555] flex items-center justify-center">
        <svg width="11" height="11" viewBox="0 0 11 11"><path d="M3.500 2.500V.5h7v7h-2M.5 3h8v7.500h-8zM.5 4.500h8" fill="none" stroke="#fff" /></svg>
      </div>
      <div className="ml-[4px] mr-[3px] w-[19px] h-[19px] rounded-[3px] bg-gradient-to-b from-[#f08a70] to-[#d04020] border border-[#a05040] flex items-center justify-center">
        <X size={14} strokeWidth={2.4} color="#ffffff" />
      </div>
    </div>
  );
};

const tabs = [
  { t: "曲线", w: "w-[56px]" },
  { t: "几何体", w: "w-[68px]" },
  { t: "工具", w: "w-[56px]" },
  { t: "应用模块", w: "w-[80px]" },
  { t: "视图", w: "w-[56px]" },
  { t: "星空 V8.00", w: "w-[92px]" },
  { t: "星空-加工工具", w: "w-[108px]" },
  { t: "星空-电极工具", w: "w-[110px]" },
  { t: "星空-常用工具", w: "w-[110px]" },
  { t: "分析", w: "w-[54px]" },
  { t: "燕秀CNC超级程式单3.3", w: "w-[160px]" },
];

const Tabs = () => (
  <div className="h-[28px] shrink-0 bg-[#1a1a1a] flex items-stretch text-[#f0f0f0]">
    <div className="w-[77px] rounded-t-[3px] bg-gradient-to-b from-[#5a86bc] via-[#1f5aa5] to-[#3f92d0] text-white flex items-center justify-center">文件(F)</div>
    <div className="ml-[7px] w-[55px] rounded-t-[3px] bg-gradient-to-b from-[#ffffff] to-[#e2e2e2] text-[#222] flex items-center justify-center">主页</div>
    {tabs.map((t) => (
      <div key={t.t} className={`${t.w} shrink-0 flex items-center justify-center whitespace-nowrap`}>{t.t}</div>
    ))}
    <div className="flex-1" />
    <div className="w-[198px] h-[23px] self-center bg-[#383838] border border-[#707070] flex items-center justify-between pr-[2px] text-[#8a8a8a]">
      <span className="whitespace-nowrap">在此输入以搜索</span>
      <Search size={17} strokeWidth={1.3} color="#dddddd" className="scale-x-[-1]" />
    </div>
    <div className="ml-[11px] w-[16px] flex items-center justify-center">
      <svg width="16" height="17" viewBox="0 0 16 17"><path d="M.5 4V.5H4M12 .5h3.500V4M15.500 13v3.500H12M4 16.500H.5V13" fill="none" stroke="#eee" /></svg>
    </div>
    <div className="ml-[8px] w-[20px] flex items-center justify-center"><ChevronUp size={24} strokeWidth={1.2} color="#eeeeee" /></div>
    <div className="ml-[6px] w-[18px] flex items-center justify-center"><CircleHelp size={17} strokeWidth={1.2} color="#eeeeee" /></div>
    <div className="ml-[14px] mr-[10px] w-[8px] flex flex-col items-center justify-center">
      <div className="w-[2px] h-[12px] bg-white" />
      <div className="w-[2px] h-[2px] bg-white mt-[2px]" />
    </div>
  </div>
);

// left rail
const railA = [
  <Sv w={20} h={24} key="a"><path d="M7 5l7-4 5 3v7l-5 3v6l-6 3-7-3v-7l6-3z" fill="#ddd" stroke="#555" /><path d="M1 14l7 3 6-3M8 17v6M7 5l6 3 6-4M13 8v6" fill="none" stroke="#555" /></Sv>,
  <Sv w={24} h={26} key="b"><path d="M1 8l8-5 7 4v13l-8 5-7-4z" fill="#ccc" stroke="#666" /><path d="M1 8l7 4v12M8 12l8-5" fill="none" stroke="#666" /><path d="M1 8l8-5 7 4-8 5z" fill="#f09030" /><path d="M8 12l8-5v8l-8 5z" fill="#d86a10" /><path d="M13 13l10 10M23 13L13 23M13 13v10M23 13v10" stroke="#222" fill="none" /></Sv>,
  <Sv w={22} h={24} key="c"><path d="M4 17L9 3l5-1-3 11 9 2 1 4-9 4-8-1z" fill="#c4c4c4" stroke="#555" /><ellipse cx="11" cy="16" rx="4" ry="2" fill="#eee" stroke="#555" /></Sv>,
  <Sv w={22} h={26} key="d"><path d="M1 5h5M1 8h5M1 11h5" stroke="#777" strokeWidth="1.4" /><path d="M7 3l13-2M7 7l13-2M7 10l10-1" stroke="#aaa" /><path d="M7 13h7v5h6v7H3v-8h4z" fill="#fff" stroke="#444" /></Sv>,
  <Sv w={22} h={26} key="e"><rect x={1} y={1} width={18} height={21} fill="#fff" stroke="#555" /><path d="M1 4h18" stroke="#3060b0" strokeWidth="2" /><path d="M1 9h18M1 13h18M1 17h18M6 5v17M11 5v17" stroke="#777" /><rect x={13} y={14} width={8} height={11} rx={3} fill="#ee8a22" /></Sv>,
  <Sv w={24} h={24} key="f"><path d="M1 12V5h6l2 2 3-2v5H7v9H1z" fill="#bbb" stroke="#555" /><path d="M14 1h3v7h-3z" fill="#ee7a20" /><rect x={4} y={8} width={3} height={3} fill="#ee7a20" /><path d="M10 21l8-8a4 4 0 0 1 5-4l-2 3 2 2 1-2a4 4 0 0 1-5 5l-7 7z" fill="#fff" stroke="#333" /></Sv>,
  <Sv w={24} h={24} key="g"><path d="M1 9h6v5H1zM3 2h6v5H3zM3 17h6v5H3zM17 4h6v5h-6zM17 12h6v5h-6z" fill="#bbb" stroke="#555" /><path d="M9 5l8 12" stroke="#ee7a20" strokeWidth="1.4" /><path d="M12 6l3 5-5-1zM13 15l-3-3 5-1z" fill="#ee7a20" /></Sv>,
  <Sv w={20} h={22} key="h"><path d="M1 5l8-4 9 3v13l-8 4-9-3z" fill="#dedede" stroke="#444" /><path d="M1 5l9 3v13M10 8l8-4M5 7v11" fill="none" stroke="#444" /></Sv>,
  <Sv w={24} h={24} key="i"><path d="M2 17L8 7l8 3 4 7-8 5z" fill="#c4c4c4" stroke="#555" /><ellipse cx="11" cy="17" rx="5" ry="2.500" fill="#eee" stroke="#555" /><path d="M13 4l5 2M13 2v4M18 3v5M19 1l4 4M23 1l-4 4" stroke="#ee7a20" /></Sv>,
  <Sv w={24} h={24} key="j"><path d="M1 14l8-5 10 4v4l-9 5-9-4z" fill="#ddd" stroke="#555" /><path d="M1 7l9-4M1 5v4M10 1v4" stroke="#ee7a20" /><circle cx="17" cy="15" r="5" fill="#fff" stroke="#333" /><path d="M13 19l-4 4" stroke="#333" strokeWidth="1.6" /></Sv>,
];
const railB = [
  <Sv w={24} h={22} key="k"><circle cx="9" cy="14" r="7" fill="#777" stroke="#444" /><path d="M9 11v7M9 9v1" stroke="#fff" strokeWidth="1.2" /><path d="M11 4a12 12 0 0 1 11 10M11 7a8 8 0 0 1 8 7" fill="none" stroke="#999" /></Sv>,
];
const railC = [
  <Sv w={24} h={26} key="l"><path d="M.5 1h23v24H.5zM.5 5h23" fill="#f4f4f4" stroke="#555" /><circle cx="11" cy="15" r="8" fill="#2c8a9a" /><path d="M6 10l5 4 3-4 2 6-5 5-4-4z" fill="#1a5f70" /><path d="M18 3h1M21 3h1" stroke="#555" /></Sv>,
];
const railD = [
  <Sv w={24} h={24} key="m"><circle cx="12" cy="12" r="11" fill="none" stroke="#555" /><path d="M12 3v9H6M1 12h2M21 12h2M12 21v2" stroke="#555" fill="none" /></Sv>,
  <svg key="n" width="22" height="26" viewBox="0 0 22 26"><defs><linearGradient id="rb" x1="0" x2="0" y1="0" y2="1"><stop offset="0" stopColor="#f02020" /><stop offset=".25" stopColor="#f0e020" /><stop offset=".5" stopColor="#20e040" /><stop offset=".75" stopColor="#20c0e0" /><stop offset="1" stopColor="#2030e0" /></linearGradient></defs><rect x={1} y={1} width={8} height={24} fill="url(#rb)" /><path d="M10 6l11 14" stroke="#222" strokeWidth="2.4" /><circle cx="10" cy="5" r="3.500" fill="#fff" /></svg>,
  <Sv w={24} h={26} key="o"><path d="M3 3h5v18H3z" fill="#3a70d0" /><path d="M3 7l5-3M3 13l5-3M3 19l5-3" stroke="#9ab8f0" /><path d="M9 9l13-6-5 8-8 3zM9 14l11-5" fill="#cfe0fa" stroke="#3a70d0" /><path d="M10 8l9 13" stroke="#222" strokeWidth="2.2" /><path d="M1 23h14" stroke="#e8c020" strokeWidth="1.4" /></Sv>,
  <Sv w={24} h={24} key="p"><path d="M1 2h8l2 3h12v18H1z" fill="#fff" stroke="#333" /><path d="M6 9l10 10M17 8L8 19" stroke="#555" strokeWidth="2.6" /></Sv>,
  <Sv w={24} h={24} key="q"><path d="M1 12V5h6l2 2 3-2v5H7v9H1z" fill="#bbb" stroke="#555" /><path d="M14 1h3v7h-3z" fill="#ee7a20" /><rect x={4} y={8} width={3} height={3} fill="#ee7a20" /><path d="M10 23c0-8 4-10 9-10v-3l5 5-5 5v-3c-4 0-6 2-6 6z" fill="#fff" stroke="#333" /></Sv>,
];

const RailBtn = ({ on, children }: { on?: boolean; children?: ReactNode }) => (
  <div
    className={`h-[40px] shrink-0 rounded-l-[3px] border border-r-0 flex items-center justify-center ${
      on ? "w-[27px] bg-[#f4f4f4] border-[#888]" : "w-[26px] bg-gradient-to-r from-[#e6e6e6] to-[#d2d2d2] border-[#888] border-r"
    }`}
  >
    {children}
  </div>
);

const Rail = () => (
  <div className="w-[31px] shrink-0 flex flex-col bg-gradient-to-r from-[#b6b6b6] via-[#adadad] to-[#8d8d8d] pl-[5px]">
    <div className="h-[47px] -ml-[5px] bg-[#dedede] flex justify-center items-center border-r border-[#999]">
      <svg width="16" height="16" viewBox="0 0 16 16" className="mt-[-15px]">
        <circle cx="8" cy="8" r="5" fill="none" stroke="#333" strokeWidth="2" />
        <circle cx="8" cy="8" r="1.600" fill="#333" />
        <path d="M8 0v2M8 14v2M0 8h2M14 8h2M2.500 2.500l1 1M12.500 12.500l1 1M2.500 13.500l1-1M12.500 3.500l1-1" stroke="#333" strokeWidth="1.500" />
      </svg>
    </div>
    <div className="flex flex-col gap-[2px]">
      {railA.map((ic, i) => (
        <RailBtn key={i} on={i === 3}>{ic}</RailBtn>
      ))}
    </div>
    <div className="mt-[13px]"><RailBtn>{railB[0]}</RailBtn></div>
    <div className="mt-[14px]"><RailBtn>{railC[0]}</RailBtn></div>
    <div className="mt-[15px] flex flex-col gap-[2px]">
      {railD.map((ic, i) => (
        <RailBtn key={i}>{ic}</RailBtn>
      ))}
    </div>
  </div>
);

// navigator table
const Check = () => (
  <svg width="15" height="14" viewBox="0 0 15 14" className="block">
    <path d="M1 8l4 5L14 1" fill="none" stroke="#2fd84a" strokeWidth="1.7" />
  </svg>
);

const OpZ = () => <ZLevel s={16} />;
const OpV = () => (
  <Sv w={15} h={15}>
    <rect x={.5} y={.5} width={14} height={14} fill="#8f8f8f" stroke="#555" />
    <path d="M2 14c0-7 3-8 5-8s2-4 6-5" fill="none" stroke="#ea8b2a" strokeWidth="2.4" />
    <path d="M7 14c0-3 2-4 7-5" fill="none" stroke="#dedede" strokeWidth="1.4" />
  </Sv>
);

type Row = { name: string; icon: ReactNode; guide: ReactNode; sel?: boolean; op?: boolean; gap?: string };

const dots = { stroke: "#999", strokeDasharray: "1 1.5", fill: "none" };

const opGuide = (last?: boolean) => (
  <svg width="55" height="20" viewBox="0 0 55 20" className="block shrink-0">
    <path d={last ? "M28 0V11H37" : "M28 0V20M28 11H37"} {...dots} />
    <path d="M46 3v14" stroke="#f0a040" strokeWidth="1.4" />
  </svg>
);

const rows: Row[] = [
  {
    name: "未用项",
    icon: (
      <Sv w={15} h={14}>
        <path d="M.5 1h5l2 2h7v10.500H.5z" fill="#e8e8e8" stroke="#444" />
        <path d="M8 5h6M8 8h6M8 11h6" stroke="#18a8d8" strokeWidth="1.4" />
      </Sv>
    ),
    guide: (
      <svg width="20" height="20" viewBox="0 0 20 20" className="block shrink-0">
        <path d="M9 11H20M9 11V20" {...dots} />
      </svg>
    ),
  },
  {
    name: "MCS",
    icon: (
      <Sv w={15} h={15}>
        <path d="M3 1v8" stroke="#2a9a2a" />
        <path d="M3 9l9-5" stroke="#2a9a2a" />
        <path d="M3 9l9 5" stroke="#d83030" />
        <text x="5" y="5" fontSize="5" fill="#222" fontFamily="Liberation Sans">z</text>
      </Sv>
    ),
    guide: (
      <svg width="20" height="20" viewBox="0 0 20 20" className="block shrink-0">
        <path d="M9 0V6M13 10H20" {...dots} />
        <rect x="4.500" y="6" width="8" height="8" fill="#fff" stroke="#666" />
        <path d="M6.500 10h4" stroke="#333" />
      </svg>
    ),
  },
  {
    name: "W-1",
    gap: "ml-[5px]",
    icon: (
      <Sv w={15} h={14}>
        <path d="M1 5l5-3 8 2v7l-5 3-8-3z" fill="#bbb" stroke="#666" />
        <path d="M1 5l8 2v7M9 7l5-3M6 2v4" fill="none" stroke="#666" />
      </Sv>
    ),
    guide: (
      <svg width="38" height="20" viewBox="0 0 38 20" className="block shrink-0">
        <path d="M28 0V20M28 11H38" {...dots} />
      </svg>
    ),
  },
  { name: "ZLEVEL_PROFILE_C...", sel: true, op: true, icon: <OpZ />, guide: opGuide() },
  { name: "ZLEVEL_PROFILE_C...", op: true, icon: <OpZ />, guide: opGuide() },
  { name: "VARIABLE_AXIS_GU...", op: true, icon: <OpV />, guide: opGuide() },
  { name: "VARIABLE_AXIS_GU...", op: true, icon: <OpV />, guide: opGuide(true) },
];

const cellBase = "shrink-0 h-full border-r border-[#e6e6e6] pl-[5px] flex items-center whitespace-nowrap overflow-hidden";

const Line = ({ alt, children, op, sel }: { alt?: boolean; children?: ReactNode; op?: boolean; sel?: boolean }) => {
  const bg = sel ? "bg-[#0078d7] border-white text-[#14284a]" : "text-[#333]";
  return (
    <div className={`h-[20px] shrink-0 flex border-b border-[#e6e6e6] ${alt ? "bg-[#f6f6f6]" : "bg-white"}`}>
      <div className="w-[200px] shrink-0 h-full border-r border-black overflow-hidden whitespace-nowrap">{children}</div>
      <div className={`w-[50px] ${cellBase} ${bg}`}>{op ? <Check /> : null}</div>
      <div className={`w-[100px] ${cellBase} ${bg}`}>{op ? "D8R4" : ""}</div>
      <div className={`w-[100px] ${cellBase} ${bg}`}>{op ? "MCS" : ""}</div>
      <div className={`w-[100px] ${cellBase} ${bg}`}>{op ? "METHOD" : ""}</div>
    </div>
  );
};

const Table = () => {
  const blank = Array.from({ length: 28 }).map((_, i) => i);
  return (
    <div className="h-[741px] border border-[#777] bg-white overflow-hidden flex flex-col">
      <div className="h-[21px] shrink-0 flex bg-gradient-to-b from-[#f6f6f6] to-[#dddddd] border-b border-[#999] text-[#333]">
        <div className="w-[200px] shrink-0 pl-[5px] border-r border-[#bbb] leading-[22px]">名称</div>
        <div className="w-[50px] shrink-0 pl-[6px] border-r border-[#bbb] leading-[22px]">刀轨</div>
        <div className="w-[100px] shrink-0 pl-[6px] border-r border-[#bbb] leading-[22px]">刀具</div>
        <div className="w-[100px] shrink-0 pl-[6px] border-r border-[#bbb] leading-[22px]">几何体</div>
        <div className="w-[100px] shrink-0 pl-[6px] border-r border-[#bbb] leading-[22px]">方法</div>
      </div>
      <Line alt={false}>
        <div className="pl-[3px] text-[#333] leading-[20px]">GEOMETRY</div>
      </Line>
      {rows.map((r, i) => (
        <Line key={i} alt={i % 2 === 0} op={r.op} sel={r.sel}>
          <div className="flex items-center h-full">
            {r.guide}
            <div className={r.op ? "w-[14px] flex justify-center" : "w-[15px] flex justify-center"}>{r.icon}</div>
            <div
              className={`h-full flex-1 flex items-center ${r.op ? "ml-[2px] pl-[2px] tracking-[-0.2px]" : r.gap ?? "ml-[3px]"} ${r.sel ? "bg-[#0078d7] text-white" : "text-[#333]"}`}
            >
              {r.name}
            </div>
          </div>
        </Line>
      ))}
      {blank.map((i) => (
        <Line key={i} alt={i % 2 === 1} />
      ))}
    </div>
  );
};

const Expander = ({ t }: { t: string }) => (
  <div className="h-[23px] shrink-0 flex bg-gradient-to-b from-[#f6f6f6] from-50% to-[#d8d8d8] to-50% border-b border-[#999] text-[#12126a]">
    <div className="flex-1 pl-[6px] leading-[24px]">{t}</div>
    <div className="w-[23px] border-l border-[#aaa] flex items-center justify-center">
      <svg width="11" height="12" viewBox="0 0 11 12"><path d="M1 1l4.500 9L10 1" fill="none" stroke="#555" strokeWidth="2.200" /></svg>
    </div>
  </div>
);

const Panel = () => (
  <div className="w-[710px] shrink-0 bg-[#ebebeb] pl-[8px] pr-[10px] flex flex-col border-b border-[#999]">
    <div className="h-[32px] shrink-0 flex items-center justify-between pl-[4px] pr-[6px]">
      <span className="font-medium text-[#222]">工序导航器 - 几何</span>
      <div className="w-[11px] h-[10px] border border-black border-t-[3px]" />
    </div>
    <Table />
    <div className="h-[13px] shrink-0 flex items-center">
      <div className="flex-1 h-px bg-[#b5b5b5]" />
      <div className="mx-[4px] w-[134px] h-[6px] bg-[#d2d2d2] border border-[#aaa]" />
      <div className="flex-1 h-px bg-[#b5b5b5]" />
    </div>
    <Expander t="相关性" />
    <Expander t="细节" />
  </div>
);

// toolpath block in the graphics window
const PLATE =
  "M1386 440L1386 330C1386 300 1395 280 1427 268L1663 353C1695 365 1715 400 1715 437L1715 767C1715 795 1705 810 1675 820L1600 795L1463 742L1420 725";
const BODY =
  "M1143 533L1217 510L1287 480Q1296 475 1303 463L1330 437L1370 402L1387 392L1386 330C1386 300 1395 280 1427 268L1663 353C1695 365 1715 400 1715 437L1715 767C1715 795 1705 810 1675 820L1650 813L1600 795L1463 742Q1420 737 1380 740L1293 755L1217 777Z";
const INNER =
  "M1143 533L1217 510L1287 480Q1296 475 1303 463L1330 437L1370 402L1387 392L1400 388L1417 357Q1428 322 1450 318Q1465 316 1477 320L1550 350L1617 370Q1650 385 1665 410L1680 447Q1688 480 1688 520L1688 700Q1686 745 1650 765Q1625 775 1600 755L1570 745L1497 743L1463 742Q1420 737 1380 740L1293 755L1217 777Z";
const BRIGHT =
  "M1387 392L1400 388L1417 357Q1428 322 1450 318Q1465 316 1477 320L1550 350L1617 370Q1650 385 1665 410L1680 447Q1688 480 1688 520L1688 700Q1686 745 1650 765";
const BRIGHT_LOW = "M1650 765Q1625 775 1600 755L1570 745L1497 743L1463 742";

const offsets = Array.from({ length: 13 }).map((_, i) => 96 - i * 7.4);
const arcs = Array.from({ length: 14 }).map((_, i) => 55 + i * 6);

const Part = () => (
  <svg width="1179" height="815" viewBox="741 203 1179 815" className="block">
    <defs>
      <pattern id="pv" width="3" height="3" patternUnits="userSpaceOnUse">
        <rect width="3" height="3" fill="#b6c2c3" />
        <rect width="1.300" height="3" fill="#1ceeee" />
      </pattern>
      <pattern id="pdl" width="3" height="3" patternUnits="userSpaceOnUse" patternTransform="rotate(58)">
        <rect width="3" height="3" fill="#d8e4e4" />
        <rect width="3" height="1.100" fill="#1cf2f2" />
      </pattern>
      <pattern id="pdw" width="3" height="3" patternUnits="userSpaceOnUse" patternTransform="rotate(58)">
        <rect width="3" height="3" fill="#f6fafa" />
        <rect width="3" height="1" fill="#1cf2f2" />
      </pattern>
      <pattern id="pdr" width="3" height="3" patternUnits="userSpaceOnUse" patternTransform="rotate(-62)">
        <rect width="3" height="3" fill="#eef4f4" />
        <rect width="3" height="1" fill="#12eeee" />
      </pattern>
      <pattern id="pbot" width="3" height="3" patternUnits="userSpaceOnUse" patternTransform="rotate(-52)">
        <rect width="3" height="3" fill="#9aa8aa" />
        <rect width="3" height="1.200" fill="#14e6e6" />
      </pattern>
      <pattern id="pg" width="2.500" height="2.500" patternUnits="userSpaceOnUse" patternTransform="rotate(-25)">
        <rect width="2.500" height="2.500" fill="#6ee85a" />
        <rect width="2.500" height="1.300" fill="#12f000" />
      </pattern>
      <clipPath id="bc"><path d={BODY} /></clipPath>
      <clipPath id="ic"><path d={INNER} /></clipPath>
      <clipPath id="ac"><path d="M1453 540L1563 527L1563 700L1468 712L1453 663Z" /></clipPath>
      <linearGradient id="corner" gradientUnits="userSpaceOnUse" x1="1740" y1="320" x2="1770" y2="450">
        <stop offset="0" stopColor="#b8b8b8" />
        <stop offset=".6" stopColor="#e2e2e2" />
        <stop offset="1" stopColor="#b4b4b4" />
      </linearGradient>
      <linearGradient id="side" x1="0" x2="0" y1="0" y2="1">
        <stop offset="0" stopColor="#b2b2b2" />
        <stop offset="1" stopColor="#a2a2a2" />
      </linearGradient>
      <linearGradient id="cornerB" gradientUnits="userSpaceOnUse" x1="1760" y1="750" x2="1745" y2="825">
        <stop offset="0" stopColor="#a6a6a6" />
        <stop offset="1" stopColor="#565656" />
      </linearGradient>
      <linearGradient id="rim" gradientUnits="userSpaceOnUse" x1="1060" y1="470" x2="1190" y2="880">
        <stop offset="0" stopColor="#a8a8a8" />
        <stop offset=".33" stopColor="#e2e2e2" />
        <stop offset=".7" stopColor="#a6a6a6" />
        <stop offset="1" stopColor="#646464" />
      </linearGradient>
      <linearGradient id="face" gradientUnits="userSpaceOnUse" x1="900" y1="560" x2="1150" y2="840">
        <stop offset="0" stopColor="#8c8c8c" />
        <stop offset="1" stopColor="#7e7e7e" />
      </linearGradient>
      <linearGradient id="groove" gradientUnits="userSpaceOnUse" x1="1030" y1="700" x2="1043" y2="745">
        <stop offset="0" stopColor="#9a9a9a" />
        <stop offset=".5" stopColor="#f0f0f0" />
        <stop offset="1" stopColor="#8e8e8e" />
      </linearGradient>
      <linearGradient id="pc" gradientUnits="userSpaceOnUse" x1="968" y1="740" x2="1003" y2="762">
        <stop offset="0" stopColor="#999" />
        <stop offset=".6" stopColor="#eee" />
        <stop offset="1" stopColor="#a0a0a0" />
      </linearGradient>
    </defs>

    {/* back plate */}
    <path d="M1386 400C1384 300 1392 270 1433 255L1500 234Q1508 232 1515 237L1743 323Q1797 345 1800 417L1800 745Q1797 795 1740 815L1700 826Q1680 830 1660 822L1386 712Z" fill="#868686" />
    <path d="M1433 255L1500 234Q1508 232 1515 237L1743 323L1675 343L1448 258Z" fill="#b6b6b6" stroke="#555" strokeWidth=".7" />
    <path d="M1743 323Q1797 345 1800 424L1733 444Q1728 375 1675 343Z" fill="url(#corner)" stroke="#555" strokeWidth=".7" />
    <path d="M1733 444L1800 424L1800 745L1732 765Z" fill="url(#side)" />
    <path d="M1732 765L1800 745Q1797 795 1740 815L1700 826Q1730 800 1732 765Z" fill="url(#cornerB)" stroke="#4a4a4a" strokeWidth=".7" />
    <path d="M1448 258L1675 343Q1728 375 1733 444L1733 765Q1730 805 1700 826Q1680 830 1672 820" fill="none" stroke="#333" strokeWidth="1" />

    {/* toolpath body */}
    <g clipPath="url(#bc)">
      {offsets.map((w) => (
        <g key={w} fill="none">
          <path d={PLATE} stroke="#12f4f4" strokeWidth={w} />
          <path d={PLATE} stroke="#a8b2b2" strokeWidth={w - 2.4} />
        </g>
      ))}
      <path d={PLATE} fill="none" stroke="#00ffff" strokeWidth="2.500" />
      <g clipPath="url(#ic)">
        <rect x="1130" y="260" width="600" height="570" fill="url(#pv)" />
        <path d="M1143 533L1370 402L1378 537L1443 640L1420 700L1343 690L1333 612L1263 633L1210 648Z" fill="url(#pdl)" />
        <path d="M1175 572L1293 537L1333 612L1263 633L1210 648Z" fill="url(#pdw)" />
        <path d="M1370 402L1427 300L1670 380L1705 500L1623 505L1517 447L1445 498L1360 477L1323 470Z" fill="url(#pdl)" />
        <path d="M1377 510L1445 498L1468 540L1413 580L1378 537Z" fill="url(#pdw)" />
        <path d="M1445 498L1517 447L1557 500L1563 527L1468 540Z" fill="url(#pdr)" />
        <path d="M1517 447L1605 443L1623 483L1623 505L1563 527Z" fill="url(#pdr)" />
        <path d="M1605 443L1680 440L1690 502L1623 505L1623 483Z" fill="url(#pdr)" opacity=".8" />
        <g clipPath="url(#ac)">
          <g fill="none" stroke="#10e8e8" strokeWidth="1" opacity=".5">
            {arcs.map((r) => (
              <circle key={r} cx="1497" cy="613" r={r} />
            ))}
          </g>
        </g>
        <path d="M1343 690L1420 700L1403 710L1468 712L1563 698L1623 688L1700 684L1700 830L1217 830L1263 733L1330 723Z" fill="url(#pbot)" />
        <path d="M1217 777L1263 736L1320 722L1377 708L1380 740L1293 755Z" fill="#22e4e4" opacity=".2" />
      </g>
      <path d={BRIGHT} fill="none" stroke="#00ffff" strokeWidth="6" strokeLinejoin="round" />
      <path d={BRIGHT_LOW} fill="none" stroke="#00ffff" strokeWidth="4" strokeLinejoin="round" />
      <path d="M1143 533L1217 510L1287 480L1303 463L1330 437L1370 402" fill="none" stroke="#00ffff" strokeWidth="5" />
      <path d="M1217 777L1293 755L1380 740Q1420 737 1463 742" fill="none" stroke="#00ffff" strokeWidth="6" />
      <path d="M1160 553L1400 457L1521 408" fill="none" stroke="url(#pg)" strokeWidth="15" />
      <path d="M1515 401L1533 390Q1548 378 1549 353L1553 353Q1560 395 1540 408L1522 416Z" fill="url(#pg)" />
      <g fill="none" stroke="#24393a" strokeWidth=".7" opacity=".8">
        <path d="M1222 557L1263 633V730M1175 572L1293 537L1517 447L1580 425M1210 648L1333 612M1158 532L1208 552" />
        <path d="M1293 537Q1325 580 1343 660Q1342 700 1330 723M1263 513Q1300 480 1323 470Q1345 470 1360 477Q1375 490 1375 500L1378 537L1413 580Q1435 595 1442 640Q1442 680 1403 710L1377 738" />
        <path d="M1377 510L1445 498M1357 475L1445 498L1468 540L1413 580M1468 540Q1455 600 1453 627V663L1468 712L1563 698L1623 688L1660 683L1712 688" />
        <path d="M1468 540Q1520 540 1563 527L1623 505L1683 502L1713 507M1445 498Q1480 470 1517 447Q1550 480 1563 527V697L1557 720M1605 443Q1620 460 1623 483V687M1618 467L1683 437" />
        <path d="M1448 258L1448 318M1560 750L1680 800" />
      </g>
    </g>

    <path d="M1108 284V507" stroke="#2222bb" strokeWidth="1" strokeDasharray="7 1.500" />
    <path d="M1556 203V253" stroke="#1818d8" strokeWidth="1.300" strokeDasharray="7 1" />
    <path d="M1556 253V311" stroke="#8c84e8" strokeWidth="1.300" strokeDasharray="8 1.500" />
    <path d="M1555 311h-3" stroke="#f0b030" strokeWidth="1.500" />
    <path d="M1553 313L1550 352" stroke="#10d810" strokeWidth="1" />

    {/* round end */}
    <path d="M972 512L1033 490A127 196 -14 0 1 1143 866L1082 888A127 196 -14 0 0 972 512Z" fill="url(#rim)" stroke="#3a3a3a" strokeWidth=".8" />
    <ellipse cx="1033" cy="697" rx="129" ry="197" transform="rotate(-14 1033 697)" fill="#c4c4c4" stroke="#333" strokeWidth=".8" />
    <ellipse cx="1027" cy="700" rx="127" ry="196" transform="rotate(-14 1027 700)" fill="url(#face)" stroke="#3c3c3c" strokeWidth=".8" />

    {/* pocket */}
    <path d="M968 630Q968 608 985 608L1073 647Q1082 655 1082 667L1082 773Q1082 796 1065 796L992 768Q968 755 968 733Z" fill="#a6a6a6" stroke="#2e2e2e" strokeWidth=".8" />
    <path d="M985 608Q990 608 996 612L1073 647L1015 625Q1003 618 985 608Z" fill="#606060" />
    <path d="M968 630Q968 608 985 608Q1003 618 1015 625L993 632Q992 630 968 630Z" fill="#7b7b7b" />
    <path d="M968 630L993 632V729L968 728Z" fill="#b2b2b2" stroke="#3a3a3a" strokeWidth=".7" />
    <path d="M993 632L1015 625L1073 647" fill="none" stroke="#3a3a3a" strokeWidth=".7" />
    <path d="M993 729L1082 702V727L1006 750Q996 743 993 729Z" fill="url(#groove)" stroke="#3a3a3a" strokeWidth=".7" />
    <path d="M968 728L993 729Q996 743 1006 750L992 768Q968 755 968 733Z" fill="url(#pc)" stroke="#3a3a3a" strokeWidth=".7" />
    <path d="M1006 750L1072 773L1060 796L992 768Z" fill="#a8a8a8" stroke="#3a3a3a" strokeWidth=".7" />
    <path d="M1072 773L1082 772Q1082 796 1065 796L1060 796Z" fill="#858585" stroke="#3a3a3a" strokeWidth=".7" />

    {/* work coordinate system */}
    <path d="M1025 701L1085 683" stroke="#d83a3a" strokeWidth="1.600" />
    <path d="M1083 678L1103 679L1086 687Z" fill="#f0b4b4" />
    <path d="M1025 701L1082 725" stroke="#2a8a2a" strokeWidth="1.600" />
    <path d="M1078 723L1094 728L1080 728Z" fill="#2a9a2a" />
    <path d="M1025 701V781" stroke="#1a40e8" strokeWidth="1.600" />
    <path d="M1022 780H1029L1025 800Z" fill="#1a40e8" />
    <text x="1086" y="677" fontSize="12.500" fill="#c93a3a" fontFamily="Liberation Sans">XM</text>
    <text x="1076" y="743" fontSize="12.500" fill="#3f9a3f" fontFamily="Liberation Sans">YM</text>
    <text x="1030" y="812" fontSize="12.500" fill="#2a5aff" fontFamily="Liberation Sans">ZM</text>

    {/* view triad */}
    <path d="M818 888L849 878L878 889V929L846 939L818 927Z" fill="none" stroke="#a8a8a8" strokeWidth="1" />
    <path d="M818 888L846 899L878 889M846 899V939" fill="none" stroke="#a8a8a8" strokeWidth="1" />
    <path d="M878 897L892 892L890 889L903 891L892 898L891 895L879 901Z" fill="#d83030" />
    <path d="M860 912L885 922L886 919L898 927L882 927L883 925L860 916Z" fill="#1f8a2a" />
    <path d="M846 939H850V961H853L848 977L844 961H846Z" fill="#0a35e8" />
    <text x="906" y="894" fontSize="12" fill="#b93a3a" fontFamily="Liberation Sans">X</text>
    <text x="899" y="935" fontSize="12" fill="#3f9a3f" fontFamily="Liberation Sans">Y</text>
    <text x="844" y="991" fontSize="12" fill="#2a50f0" fontFamily="Liberation Sans">Z</text>
  </svg>
);

const Viewport = () => (
  <div className="flex-1 min-w-0 flex flex-col">
    <div className="h-[23px] shrink-0 bg-[#ebebeb] flex">
      <div className="w-[144px] bg-[#555] text-[#e8e8e8] flex items-center pl-[6px]">
        <svg width="12" height="16" viewBox="0 0 12 16" className="block shrink-0"><path d="M1 1h8v6H4v6h5" fill="none" stroke="#999" /></svg>
        <span className="ml-[9px] whitespace-nowrap">四轴案例-3.prt</span>
        <svg width="11" height="11" viewBox="0 0 11 11" className="ml-[7px] block shrink-0"><path d="M.5 2.500h8v8h-8zM3 2.500V.5h7.500v7.500" fill="none" stroke="#eee" /></svg>
        <X size={13} strokeWidth={3} color="#ffffff" className="ml-[4px]" />
      </div>
    </div>
    <div className="h-[815px] bg-[linear-gradient(to_bottom,#232426_0%,#38393b_30%,#4e4f51_65%,#58595b_100%)]">
      <Part />
    </div>
  </div>
);

export default function App() {
  return (
    <div className="w-[1920px] h-[1039px] overflow-hidden flex flex-col text-[12px] [font-family:'Noto_Sans','Noto_Sans_CJK_SC',sans-serif]">
      <Title />
      <Tabs />
      <Ribbon />
      <Toolbar />
      <div className="h-[838px] shrink-0 flex">
        <Rail />
        <Panel />
        <Viewport />
      </div>
      <div className="h-[21px] shrink-0 bg-[#d8d8d8] border-t border-[#aaa] flex items-center justify-end pr-[2px]">
        <span className="whitespace-nowrap text-[14px] tracking-[1.500px] text-[#6c6c6c] [text-shadow:1px_1px_0_#f2f2f2] [font-family:'Liberation_Mono','Noto_Sans_CJK_SC',monospace]">UG爱好者论坛@学习雷锋好榜样*</span>
      </div>
    </div>
  );
}
